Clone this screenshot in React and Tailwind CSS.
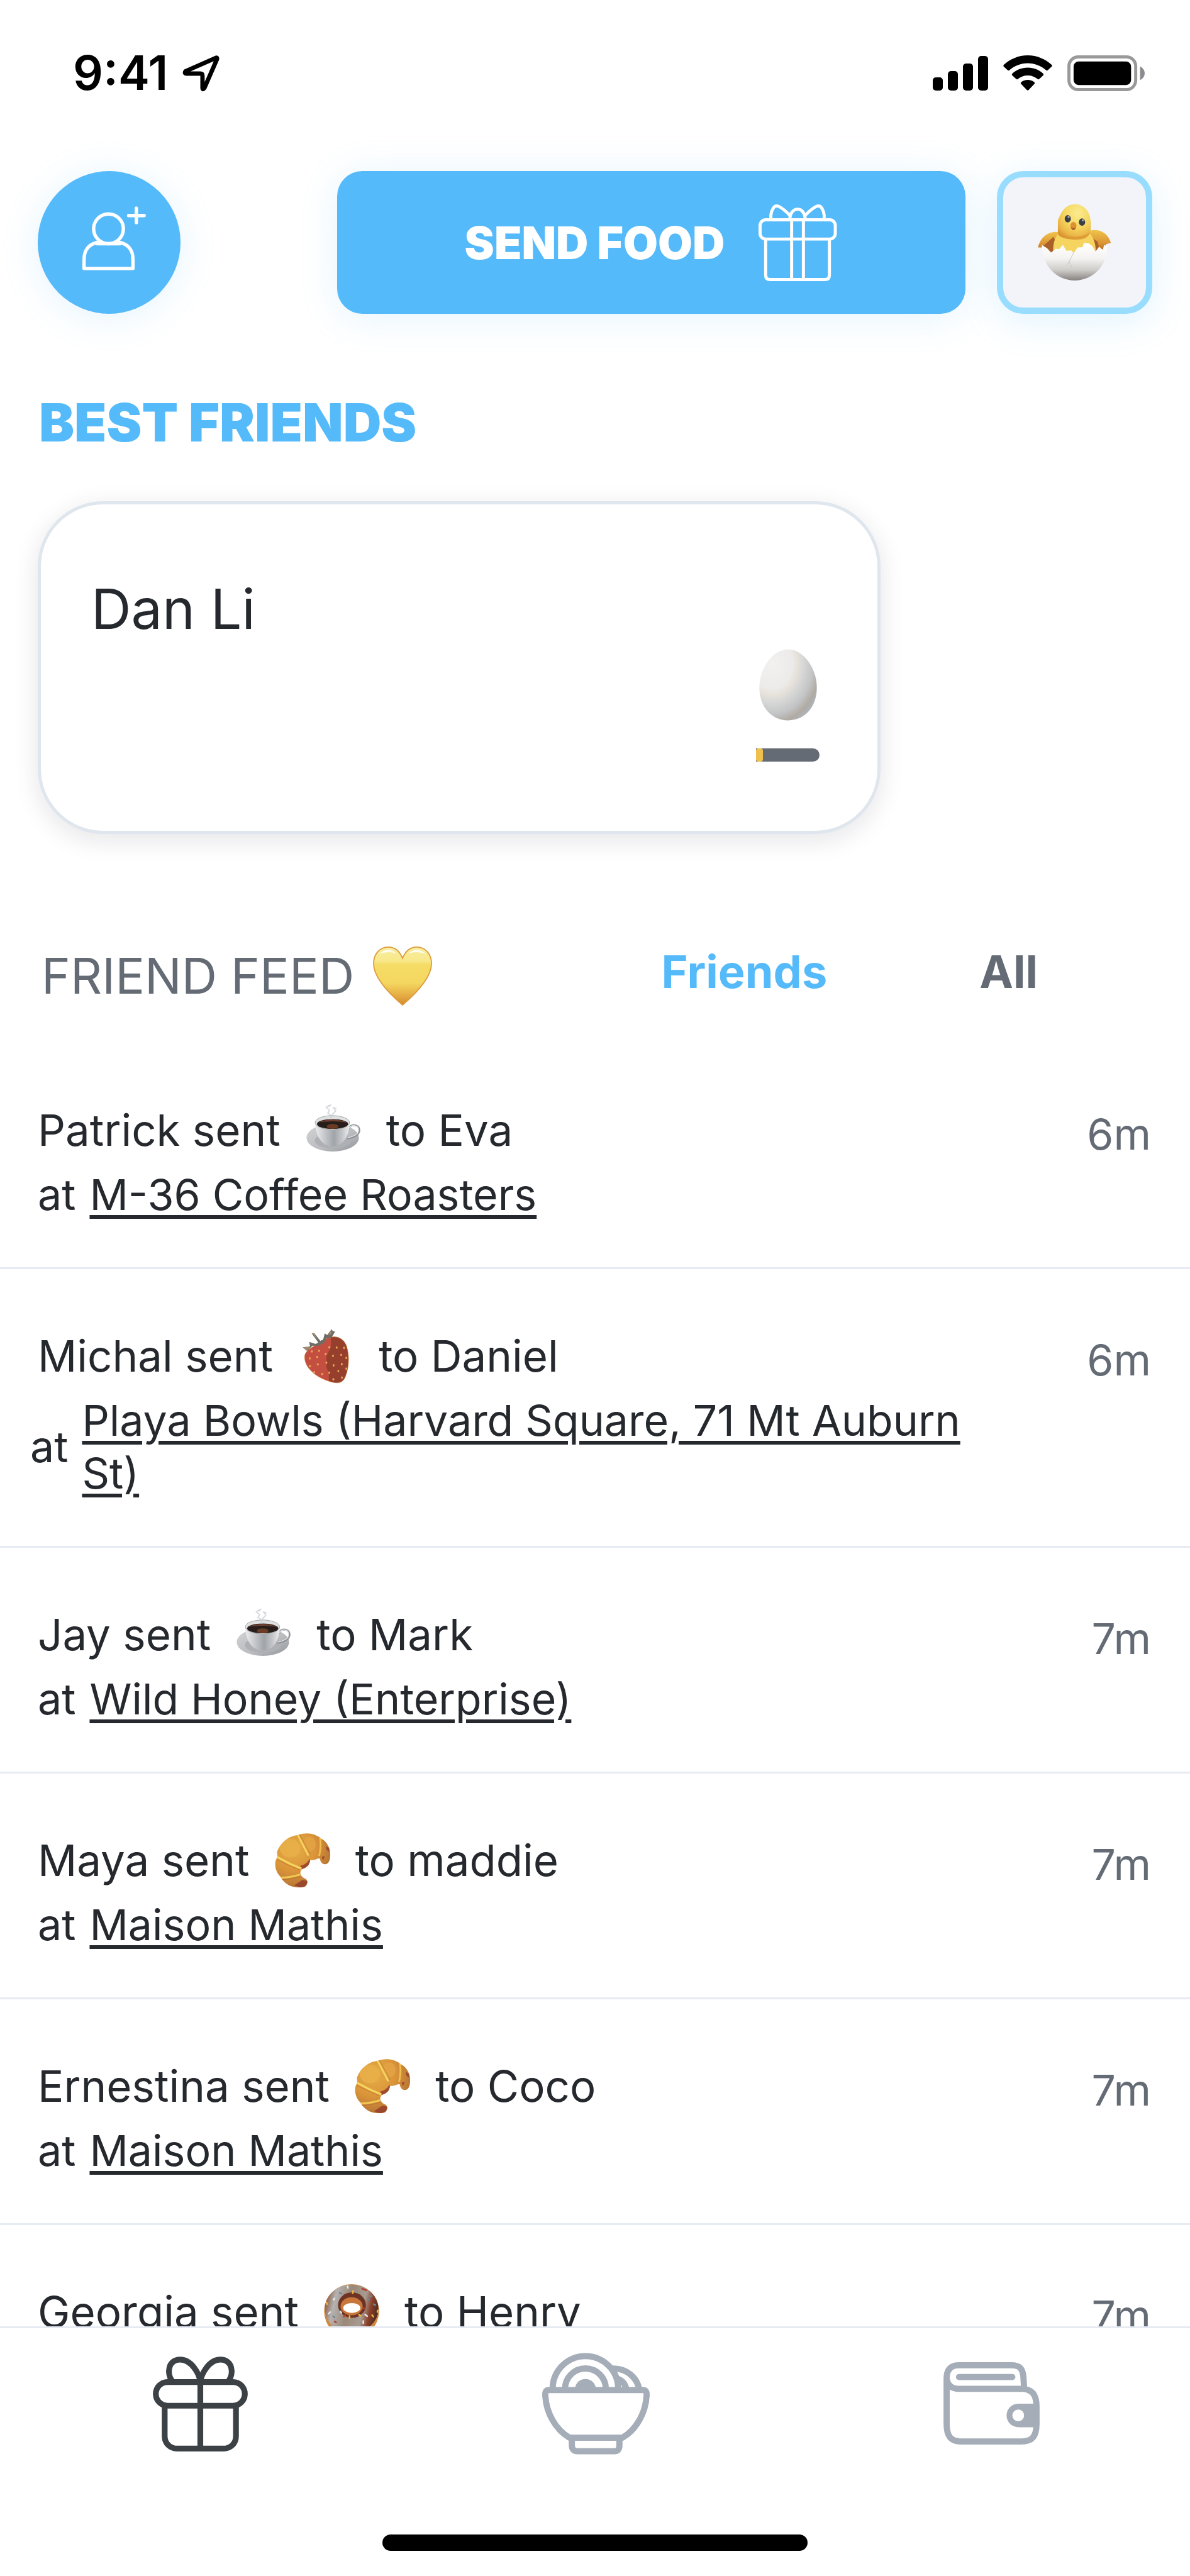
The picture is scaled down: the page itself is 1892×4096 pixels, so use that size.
import React, { useState } from 'react';

function LocationArrow() {
  return (
    <svg viewBox="292 88 64 62" className="h-[61px] w-[63px]" fill="none" stroke="#000" strokeWidth="7" strokeLinejoin="round" strokeLinecap="round" aria-hidden="true">
      <path d="M349.500 94 L300.500 115.500 Q297.500 118.500 301 119.500 H324 Q327.500 119.500 327.500 123 V143 Q328 146.500 330.500 143 L351 96 Q351.500 93.500 349.500 94 Z" />
    </svg>
  );
}

function SignalIcon() {
  return (
    <svg viewBox="0 0 88 55" className="h-[55px] w-[88px]" aria-hidden="true">
      <rect x="0" y="34" width="16" height="21" rx="5" />
      <rect x="24" y="24" width="16" height="31" rx="5" />
      <rect x="48" y="12" width="16" height="43" rx="5" />
      <rect x="72" y="0" width="16" height="55" rx="5" />
    </svg>
  );
}

function WifiIcon() {
  return (
    <svg viewBox="0 0 78 56" className="h-[56px] w-[78px]" aria-hidden="true">
      <path d="M39 0 C54 0 67 6 77 15 Q78.500 16.500 77 18 L71 23.500 Q69.500 25 68 23.500 C60 16.500 50 12.500 39 12.500 C28 12.500 18 16.500 10 23.500 Q8.500 25 7 23.500 L1 18 Q-.500 16.500 1 15 C11 6 24 0 39 0 Z" />
      <path d="M39 19.500 C48.500 19.500 57 23 63.500 29 Q65 30.500 63.500 32 L57.500 37.500 Q56 39 54.500 37.500 C50 34 45 32 39 32 C33 32 28 34 23.500 37.500 Q22 39 20.500 37.500 L14.500 32 Q13 30.500 14.500 29 C21 23 29.500 19.500 39 19.500 Z" />
      <path d="M39 39 C43 39 46.500 40.300 49.500 42.700 Q51 44 49.500 45.600 L40.500 55 Q39 56.500 37.500 55 L28.500 45.600 Q27 44 28.500 42.700 C31.500 40.300 35 39 39 39 Z" />
    </svg>
  );
}

function BatteryIcon() {
  return (
    <svg viewBox="0 0 125 58" className="h-[57px] w-[123px]" aria-hidden="true">
      <rect x="2.500" y="2.500" width="108" height="53" rx="15" fill="none" stroke="#999" strokeWidth="5" />
      <rect x="10" y="10" width="93" height="38" rx="8" />
      <path d="M117.500 18 C122 20 125 24 125 29 C125 34 122 38 117.500 40 Z" fill="#8b8b90" />
    </svg>
  );
}

function AddFriendIcon() {
  return (
    <svg viewBox="112 326 130 130" className="size-[128px]" fill="none" stroke="#fff" strokeWidth="5.500" strokeLinejoin="round" strokeLinecap="round" aria-hidden="true">
      <circle cx="175.500" cy="368.500" r="24" />
      <path d="M162 390 C145 391 136 402 136 418 V432.500 H215 V418 C215 402 206 391 189 390" />
      <path d="M157 392.500 H194 M220.500 335 V358.500 M208 347 H233" />
    </svg>
  );
}

function GiftOutlineIcon() {
  return (
    <svg viewBox="1223 327 130 128" className="h-[126px] w-[128px]" fill="none" stroke="#fff" strokeWidth="5" strokeLinejoin="round" aria-hidden="true">
      <rect x="1227.500" y="354" width="121.500" height="31" rx="9" />
      <path d="M1236.500 385 V443 Q1236.500 450.500 1244 450.500 H1332 Q1339.500 450.500 1339.500 443 V385" />
      <path d="M1278.500 352 V450 M1297.500 352 V450" />
      <path d="M1245 353 C1244 344 1247 336 1251 332.500 Q1254 330.500 1258 332.500 C1263 335 1270 341 1275 346" />
      <path d="M1331 353 C1332 344 1329 336 1325 332.500 Q1322 330.500 1318 332.500 C1313 335 1306 341 1301 346" />
      <path d="M1275.500 354 C1275.500 331 1300.500 331 1300.500 354" />
    </svg>
  );
}

function GiftTabIcon() {
  return (
    <svg viewBox="138 425 460 461" className="size-[151px]" fill="none" stroke="#3c4145" strokeWidth="28" aria-hidden="true">
      <rect x="152" y="549" width="432" height="115" rx="57" />
      <path d="M195 660 V812 C195 848 222 872 256 872 H480 C514 872 541 848 541 812 V660 M368 520 V872" />
      <path d="M368 549 C364 510 326 440 270 440 C213 440 202 505 232 546" />
      <path d="M368 549 C372 510 410 440 465 440 C523 440 534 505 504 546" />
    </svg>
  );
}

function BowlTabIcon() {
  return (
    <svg viewBox="875 3796 176 166" className="h-[164px] w-[173px]" fill="none" stroke="#a4adb8" strokeWidth="10" strokeLinejoin="round" aria-hidden="true">
      <path d="M951 3855 A42 42 0 0 1 1033 3855 M973 3855 A20 22 0 0 1 1012 3855" />
      <circle cx="946" cy="3855" r="53" fill="#fff" />
      <circle cx="946" cy="3855" r="33" />
      <circle cx="946" cy="3856" r="17" fill="#a4adb8" stroke="none" />
      <path d="M886 3857 H1040 Q1045 3857 1045 3864 C1044 3894 1028 3921 1006 3934 H920 C898 3921 882 3894 881 3864 Q881 3857 886 3857 Z" fill="#fff" />
      <path d="M924 3934 V3946 Q924 3956 933 3956 H993 Q1001 3956 1001 3946 V3934" />
    </svg>
  );
}

function WalletTabIcon() {
  return (
    <svg viewBox="1524 3811 158 136" className="h-[134px] w-[156px]" fill="none" stroke="#a4adb8" strokeWidth="10" strokeLinejoin="round" aria-hidden="true">
      <path d="M1655 3855 L1654 3837 C1653 3822 1648 3817 1634 3817 H1549 C1535 3817 1530 3826 1530 3838 V3912 C1530 3932 1537 3940 1554 3940 H1650 C1668 3940 1675 3932 1675 3912 V3884 C1675 3864 1668 3855 1650 3855 H1549 C1536 3855 1530 3846 1530 3836" />
      <path d="M1550 3836 H1636" strokeLinecap="round" />
      <path d="M1675 3879 H1647 C1620 3879 1620 3917 1647 3917 H1675 Z" fill="#a4adb8" stroke="none" />
      <circle cx="1645.500" cy="3898" r="9.500" fill="#fff" stroke="none" />
    </svg>
  );
}

function Chick() {
  return (
    <svg viewBox="99 80 356 375" className="h-[123px] w-[117px]" role="img" aria-label="Hatching chick">
      <defs>
        <radialGradient id="chick-head" cx=".6" cy=".25" r=".8">
          <stop offset="0" stopColor="#fbec90" />
          <stop offset=".5" stopColor="#f5d761" />
          <stop offset=".8" stopColor="#ecb848" />
          <stop offset="1" stopColor="#d99332" />
        </radialGradient>
        <linearGradient id="chick-wing" x1="0" y1="0" x2="0" y2="1">
          <stop offset="0" stopColor="#f0c44c" />
          <stop offset=".6" stopColor="#dc9636" />
          <stop offset="1" stopColor="#b56a24" />
        </linearGradient>
        <linearGradient id="chick-shell" x1="0" y1="0" x2="0" y2="1">
          <stop offset="0" stopColor="#fff" />
          <stop offset=".4" stopColor="#f5f4f2" />
          <stop offset=".72" stopColor="#cfcdca" />
          <stop offset="1" stopColor="#85827f" />
        </linearGradient>
      </defs>
      <path d="M100 292 C110 245 145 212 200 217 L210 310 L125 292 Z" fill="url(#chick-wing)" />
      <path d="M345 212 C400 195 440 225 453 270 L430 276 L420 300 L350 310 Z" fill="url(#chick-wing)" />
      <path d="M125 285 L175 240 L210 320 L150 330 Z" fill="#a9602a" />
      <path d="M350 240 L388 262 L400 310 L350 320 Z" fill="#a9602a" />
      <path d="M198 225 C170 260 170 300 178 345 H375 C385 300 378 255 350 222 Z" fill="#f5d560" />
      <path d="M196 222 V160 C212 125 225 84 280 82 C330 84 358 125 356 185 C358 250 320 254 275 254 C230 252 196 240 196 222 Z" fill="url(#chick-head)" />
      <path d="M198 215 C230 245 320 250 352 215 C345 265 210 265 198 215 Z" fill="#dc9836" opacity=".75" />
      <ellipse cx="244" cy="153" rx="15" ry="18" fill="#3a3f48" />
      <ellipse cx="313" cy="169" rx="15" ry="18" fill="#3a3f48" />
      <circle cx="248" cy="144" r="5" fill="#a8afb8" />
      <circle cx="317" cy="160" r="5" fill="#a8afb8" />
      <path d="M271 168 C284 170 290 184 284 196 Q270 220 258 196 C253 184 260 170 271 168 Z" fill="#dc922f" />
      <path d="M259 194 Q271 199 284 194 Q271 222 259 194 Z" fill="#a8642a" />
      <path d="M118 280 L144 296 L163 316 L186 298 L202 300 L220 280 L238 308 L262 306 L272 320 L292 292 L316 290 L322 270 L345 272 L362 284 L378 312 L396 288 L414 304 L420 280 L434 286 C438 380 365 452 278 452 C190 452 118 380 118 280 Z" fill="url(#chick-shell)" />
      <path d="M272 318 L250 362 L238 380 M250 362 L264 388" fill="none" stroke="#c9c6c3" strokeWidth="3" />
    </svg>
  );
}

function Egg() {
  return (
    <svg viewBox="128 143 282 348" className="h-[114px] w-[92px]" role="img" aria-label="Egg">
      <defs>
        <radialGradient id="egg-fill" cx=".22" cy=".2" r=".9">
          <stop offset="0" stopColor="#f2f1f1" />
          <stop offset=".4" stopColor="#ecebe9" />
          <stop offset=".5" stopColor="#e6e1d9" />
          <stop offset=".6" stopColor="#d8d8d8" />
          <stop offset=".8" stopColor="#c2c3c4" />
          <stop offset=".93" stopColor="#b0aaa2" />
          <stop offset="1" stopColor="#aeb2b6" />
        </radialGradient>
      </defs>
      <path d="M269 144 C345 144 409 238 409 330 C409 425 350 490 269 490 C188 490 129 425 129 330 C129 238 193 144 269 144 Z" fill="url(#egg-fill)" />
    </svg>
  );
}

function YellowHeart() {
  return (
    <svg viewBox="0 0 96 96" className="size-[94px]" role="img" aria-label="Yellow heart">
      <defs>
        <linearGradient id="heart-fill" x1="0" y1="0" x2="0" y2="1">
          <stop offset="0" stopColor="#f9ee9e" />
          <stop offset=".24" stopColor="#f8e88a" />
          <stop offset=".3" stopColor="#f5dc66" />
          <stop offset=".62" stopColor="#f4d75f" />
          <stop offset=".8" stopColor="#e8b348" />
          <stop offset="1" stopColor="#d68a2e" />
        </linearGradient>
      </defs>
      <path d="M48 19 C53 7 61 1 71 1 C85 1 95 12 95 28 C95 50 70 76 48 95 C26 76 1 50 1 28 C1 12 11 1 25 1 C35 1 43 7 48 19 Z" fill="url(#heart-fill)" stroke="#dc9a3c" strokeWidth="1.800" />
      <path d="M10 12 Q24 -1 38 11 Q24 7 10 12 Z M58 11 Q72 -1 86 12 Q72 7 58 11 Z" fill="#fff" opacity=".85" />
    </svg>
  );
}

function Coffee() {
  return (
    <svg viewBox="116 66 270 270" className="size-[88px]" role="img" aria-label="Coffee">
      <defs>
        <linearGradient id="cup-fill" x1="0" y1="0" x2="1" y2="0">
          <stop offset="0" stopColor="#ecedef" />
          <stop offset=".25" stopColor="#c9cbce" />
          <stop offset=".55" stopColor="#a0a4a9" />
          <stop offset=".8" stopColor="#c6c8cb" />
          <stop offset="1" stopColor="#efeff0" />
        </linearGradient>
        <linearGradient id="saucer-fill" x1="0" y1="0" x2="1" y2="1">
          <stop offset="0" stopColor="#d2d4d6" />
          <stop offset=".6" stopColor="#b9bbbe" />
          <stop offset="1" stopColor="#8f9398" />
        </linearGradient>
      </defs>
      <ellipse cx="248" cy="238" rx="128" ry="67" fill="url(#saucer-fill)" />
      <ellipse cx="248" cy="252" rx="88" ry="38" fill="#aeb0b3" />
      <path d="M324 196 C338 166 378 174 378 200 C378 226 346 238 318 242" fill="none" stroke="#8d9197" strokeWidth="9" />
      <path d="M326 194 C340 170 374 176 374 200 C374 222 346 234 320 238" fill="none" stroke="#e3e4e6" strokeWidth="4" />
      <path d="M162 162 C162 225 192 279 246 279 C302 279 330 225 330 162 Z" fill="url(#cup-fill)" />
      <ellipse cx="246" cy="164" rx="84" ry="34" fill="#dfe0e2" stroke="#a3a6aa" strokeWidth="3" />
      <ellipse cx="247" cy="171" rx="76" ry="24" fill="#271d1b" />
      <path d="M178 164 Q205 150 247 149 Q292 150 316 164 Q285 158 247 158 Q206 158 178 164 Z" fill="#6f4130" />
      <ellipse cx="247" cy="183" rx="28" ry="12" fill="#6b3c25" />
      <path d="M244 148 L236 126 L224 118 L232 104 L216 90 L232 78 M244 126 L262 108 L252 92 L266 96 M228 88 L240 76" fill="none" stroke="#c9ccd2" strokeWidth="6" opacity=".75" />
    </svg>
  );
}

const STRAWBERRY_SEEDS = [
  [115, 1266], [150, 1263], [105, 1300], [141, 1293], [182, 1279], [200, 1246], [236, 1247], [272, 1249], [258, 1283], [218, 1288],
  [283, 1298], [186, 1321], [144, 1329], [221, 1334], [261, 1328], [106, 1338], [126, 1368], [165, 1376], [200, 1370], [244, 1362], [283, 1350], [262, 1394], [220, 1402],
];

function Strawberry() {
  return (
    <svg viewBox="48 1153 270 270" className="size-[88px]" role="img" aria-label="Strawberry">
      <path d="M80 1288 C84 1256 130 1240 178 1208 C220 1182 268 1196 284 1240 C298 1285 298 1340 278 1390 C264 1424 238 1424 200 1412 C134 1392 76 1344 80 1288 Z" fill="#c44f40" />
      <path d="M208 1196 C245 1188 274 1208 284 1240 C298 1285 298 1340 278 1390 C266 1420 238 1424 198 1411 V1370 L186 1345 V1290 L208 1245 Z" fill="#963f2c" />
      <path d="M80 1288 C84 1256 130 1240 178 1208 C220 1182 268 1196 284 1240 C298 1285 298 1340 278 1390 C264 1424 238 1424 200 1412 C134 1392 76 1344 80 1288 Z" fill="none" stroke="#cf8438" strokeWidth="2" />
      {STRAWBERRY_SEEDS.map(([x, y]) => (
        <ellipse key={`${x}-${y}`} cx={x} cy={y} rx="4.500" ry="6" fill="#e2a858" />
      ))}
      <path d="M70 1246 L106 1242 L102 1220 L134 1230 L146 1222 L114 1178 L126 1176 L156 1214 L170 1208 L178 1178 L190 1186 L212 1157 L216 1166 L228 1170 L210 1200 L186 1202 L174 1226 L142 1240 L118 1238 L92 1264 Z" fill="#6f6c66" />
      <path d="M72 1246 L106 1244 L92 1262 Z M116 1178 L124 1177 L146 1212 Z M194 1188 L212 1160 L210 1182 Z" fill="#a58a6c" />
    </svg>
  );
}

function Croissant() {
  return (
    <svg viewBox="56 54 270 270" className="size-[88px]" role="img" aria-label="Croissant">
      <defs>
        <radialGradient id="croissant-fill" cx=".35" cy=".3" r=".75">
          <stop offset="0" stopColor="#e6ad48" />
          <stop offset=".5" stopColor="#db9539" />
          <stop offset=".8" stopColor="#c07d36" />
          <stop offset="1" stopColor="#a5622c" />
        </radialGradient>
        <clipPath id="croissant-shape">
          <path d="M66 150 C80 110 115 72 165 66 C190 56 235 52 262 70 Q275 75 280 82 C310 95 328 130 326 165 C325 190 318 208 300 208 C285 208 278 195 275 180 C262 178 255 190 228 188 C225 215 208 226 188 232 C178 245 178 255 186 265 Q192 275 208 280 C218 290 216 308 205 316 C175 326 145 322 120 308 Q95 292 84 270 C58 245 52 205 62 185 Q72 168 66 150 Z" />
        </clipPath>
      </defs>
      <g clipPath="url(#croissant-shape)">
        <rect x="50" y="50" width="280" height="280" fill="url(#croissant-fill)" />
        <ellipse cx="130" cy="130" rx="50" ry="45" fill="#e8b04a" opacity=".8" />
        <ellipse cx="225" cy="110" rx="30" ry="36" fill="#e3a445" opacity=".8" />
        <path d="M226 182 Q210 210 180 216 L190 240 L232 215 Z M150 312 L190 285 L220 290 L195 325 Z" fill="#94402a" opacity=".85" />
        <path d="M306 120 L322 130 L322 150 L306 135 Z M284 172 L300 168 L292 190 Z" fill="#94402a" opacity=".8" />
        <path d="M166 62 L220 166" stroke="#f4d45e" strokeWidth="9" />
        <path d="M66 172 L130 206 L186 230" fill="none" stroke="#f4d45e" strokeWidth="10" />
        <path d="M82 274 Q130 274 180 258" fill="none" stroke="#f0c653" strokeWidth="10" />
        <path d="M276 78 Q284 120 272 168" fill="none" stroke="#f0be4e" strokeWidth="9" />
        <path d="M176 62 L230 160 M66 186 L120 212 L176 236 M84 284 Q134 284 184 268" fill="none" stroke="#a9622b" strokeWidth="3" opacity=".6" />
      </g>
    </svg>
  );
}

function Donut() {
  return (
    <svg viewBox="963 82 270 270" className="size-[88px]" role="img" aria-label="Doughnut">
      <defs>
        <linearGradient id="icing-fill" x1="0" y1=".3" x2="1" y2=".5">
          <stop offset="0" stopColor="#8a5137" />
          <stop offset=".18" stopColor="#b5b2b0" />
          <stop offset=".45" stopColor="#9a8878" />
          <stop offset=".72" stopColor="#a79c92" />
          <stop offset=".86" stopColor="#8b4029" />
          <stop offset="1" stopColor="#4e2c20" />
        </linearGradient>
      </defs>
      <ellipse cx="1098" cy="214" rx="134" ry="132" fill="#d08a3f" />
      <ellipse cx="1098" cy="202" rx="131" ry="118" fill="url(#icing-fill)" />
      <ellipse cx="1100" cy="184" rx="68" ry="62" fill="#6d3324" />
      <ellipse cx="1098" cy="190" rx="54" ry="44" fill="#c8763a" />
      <ellipse cx="1099" cy="198" rx="42" ry="24" fill="#fff" />
      <g strokeWidth="8" strokeLinecap="round">
        <path d="M1106 114 L1103 126 M976 172 L978 180 M1088 237 V248 M1198 233 L1204 240 M1225 210 L1224 218 M1134 230 L1142 236" stroke="#efb545" />
        <path d="M1078 92 L1080 100 M986 226 L994 218 M1044 216 L1048 222 M1164 230 L1174 238 M1155 262 V272 M1010 158 L1014 152" stroke="#e6e8ec" />
        <path d="M1040 124 L1048 128 M1188 142 L1196 140 M1206 180 L1214 184 M1008 238 L1014 244 M1176 162 L1182 156" stroke="#6f8798" />
        <path d="M1154 200 H1164 M1060 240 L1066 234 M1016 264 L1022 268 M1150 104 L1170 112" stroke="#b5402b" />
      </g>
    </svg>
  );
}

const FEED = [
  { from: 'Patrick', to: 'Eva', Food: Coffee, place: 'M-36 Coffee Roasters', ago: '6m' },
  { from: 'Michal', to: 'Daniel', Food: Strawberry, place: 'Playa Bowls (Harvard Square, 71 Mt Auburn St)', ago: '6m', wide: true },
  { from: 'Jay', to: 'Mark', Food: Coffee, place: 'Wild Honey (Enterprise)', ago: '7m' },
  { from: 'Maya', to: 'maddie', Food: Croissant, place: 'Maison Mathis', ago: '7m' },
  { from: 'Ernestina', to: 'Coco', Food: Croissant, place: 'Maison Mathis', ago: '7m' },
  { from: 'Georgia', to: 'Henry', Food: Donut, ago: '7m' },
];

function FeedRow({ from, to, Food, place, ago, wide }) {
  return (
    <li className="flex items-start justify-between border-b-3 border-[#e6eaf2] pt-[94px] pr-[62px] pb-[74px] text-[68px] leading-[84px]">
      <div className="flex min-w-0 flex-1 flex-col gap-[16px]">
        <p className="flex items-center pl-[60px] text-[69px] leading-[88px]">
          {from} sent
          <span className="mx-[40px] shrink-0"><Food /></span>
          to {to}
        </p>
        {place && (
          <p className={wide ? 'flex items-center gap-[22px] pl-[48px]' : 'flex items-center gap-[22px] pl-[60px]'}>
            at
            <a href="#place" className="max-w-[1420px] underline decoration-[6px] underline-offset-[8px]">{place}</a>
          </p>
        )}
      </div>
      <time className="mt-[8px] text-[#646b75]">{ago}</time>
    </li>
  );
}

export default function App() {
  const [scope, setScope] = useState('friends');
  return (
    <div className="flex h-screen flex-col overflow-hidden bg-white font-['Inter',sans-serif] text-[#25292e]">
      <header className="flex h-[232px] shrink-0 items-center justify-between pr-[72px] pl-[116px] text-black">
        <div className="flex items-center gap-[20px]">
          <span className="text-[75px] leading-[80px] font-semibold">9:41</span>
          <LocationArrow />
        </div>
        <div className="flex items-center gap-[24px]">
          <SignalIcon />
          <WifiIcon />
          <BatteryIcon />
        </div>
      </header>

      <div className="mt-[40px] flex shrink-0 items-center px-[60px]">
        <button type="button" aria-label="Add friend" className="flex size-[227px] items-center justify-center rounded-full bg-[#55bafa] shadow-[0_6px_60px_rgba(85,186,250,0.16)]">
          <AddFriendIcon />
        </button>
        <button type="button" className="ml-[249px] flex h-[227px] flex-1 items-center justify-center gap-[52px] rounded-[40px] bg-[#55bafa] text-[71px] leading-[84px] font-black text-white shadow-[0_6px_60px_rgba(85,186,250,0.16)]">
          SEND FOOD
          <GiftOutlineIcon />
        </button>
        <button type="button" aria-label="My pet" className="ml-[50px] flex h-[227px] w-[247px] items-center justify-center rounded-[42px] border-10 border-[#98dcfe] bg-[#f3f4f9] shadow-[0_12px_60px_rgba(85,186,250,0.18)]">
          <Chick />
        </button>
      </div>

      <section className="shrink-0 px-[60px]">
        <h2 className="mt-[123px] pl-[2px] text-[84px] leading-[100px] font-black text-[#55bafa]">BEST FRIENDS</h2>
        <article className="mt-[75px] flex w-full max-w-[1340px] flex-col rounded-[104px] border-5 border-[#dfe6ee] bg-white pt-[116px] pr-[92px] pb-[110px] pl-[80px] shadow-[0_10px_40px_rgba(20,20,50,0.11)]">
          <h3 className="text-[88px] leading-[100px]">Dan Li</h3>
          <div className="mt-[14px] flex w-[101px] flex-col items-center gap-[44px] self-end">
            <Egg />
            <div className="h-[21px] w-full overflow-hidden rounded-r-full bg-[#646b75]">
              <div className="h-full w-[11px] rounded-[4px] bg-[#f0c04c]" />
            </div>
          </div>
        </article>
      </section>

      <div className="mt-[176px] flex shrink-0 items-start justify-between pr-[242px] pl-[66px]">
        <h2 className="flex items-center gap-[30px] text-[78px] leading-[100px] text-[#646b75]">
          FRIEND FEED
          <YellowHeart />
        </h2>
        <div className="flex gap-[242px] text-[72px] leading-[86px] font-bold">
          <button type="button" onClick={() => setScope('friends')} className={scope === 'friends' ? 'text-[#55bafa]' : 'text-[#646b75]'}>Friends</button>
          <button type="button" onClick={() => setScope('all')} className={scope === 'all' ? 'text-[#55bafa]' : 'text-[#646b75]'}>All</button>
        </div>
      </div>

      <ul className="mt-[57px] min-h-0 flex-1 overflow-hidden">
        {FEED.map((item) => (
          <FeedRow key={item.from} {...item} />
        ))}
      </ul>

      <nav className="shrink-0 border-t-3 border-[#e6eaf2] bg-white pb-[40px]">
        <div className="grid h-[240px] grid-cols-3 pl-[4px]">
          <button type="button" aria-label="Gifts" className="flex items-center justify-center"><GiftTabIcon /></button>
          <button type="button" aria-label="Food" className="flex items-center justify-center"><BowlTabIcon /></button>
          <button type="button" aria-label="Wallet" className="flex items-center justify-center"><WalletTabIcon /></button>
        </div>
        <div className="mx-auto mt-[88px] h-[26px] w-[676px] rounded-full bg-black" />
      </nav>
    </div>
  );
}
